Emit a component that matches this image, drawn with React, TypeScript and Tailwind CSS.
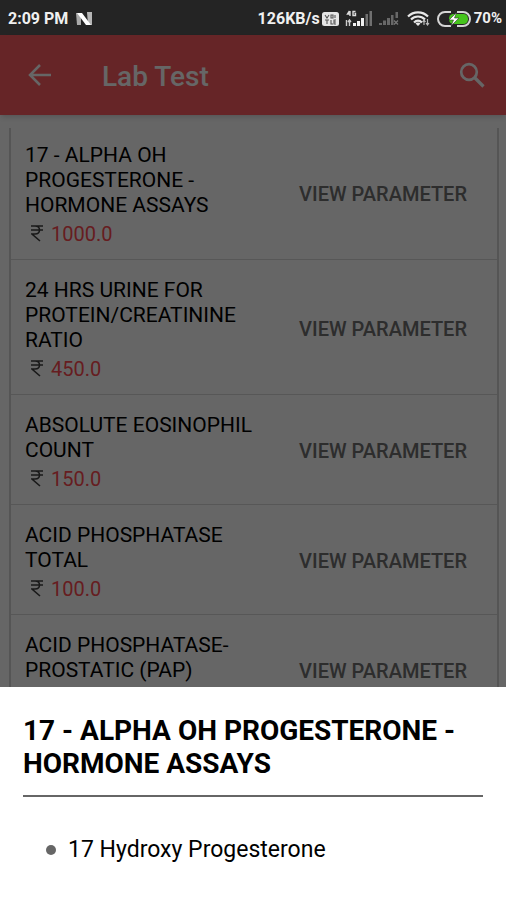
const tests = [
  { name: '17 - ALPHA OH PROGESTERONE - HORMONE ASSAYS', price: '1000.0' },
  { name: '24 HRS URINE FOR PROTEIN/CREATININE RATIO', price: '450.0' },
  { name: 'ABSOLUTE EOSINOPHIL COUNT', price: '150.0' },
  { name: 'ACID PHOSPHATASE TOTAL', price: '100.0' },
  { name: 'ACID PHOSPHATASE-PROSTATIC (PAP)', price: '500.0' },
];

function NIcon() {
  return (
    <svg width="17" height="14" viewBox="0 0 17 14" aria-hidden="true">
      <path d="M0 1h5v12H1z" fill="#a8a8a8" />
      <path d="M11 0h5v13h-4z" fill="#b5b5b5" />
      <path d="M1 1h5l9 12h-5z" fill="#fff" />
    </svg>
  );
}

function VolteIcon() {
  return (
    <svg width="17" height="14" viewBox="0 0 17 14" aria-hidden="true">
      <rect width="17" height="14" rx="2.5" fill="#e6e6e6" />
      <path d="M3 3l2 3 2-3M9 3h2v3H9zM13 3v3M3 8h4M5 8v4M9 8v4h2M14 8h-2v4h2M12 10h2" stroke="#555" strokeWidth="1.1" fill="none" />
    </svg>
  );
}

function SignalIcon() {
  return (
    <svg width="28" height="17" viewBox="0 0 28 17" aria-hidden="true">
      <path d="M4.5 1L2.5 4h3M5 1v5M10.500 1.500H8v4h2.500v-2H9.500" stroke="#ddd" strokeWidth="1.400" fill="none" />
      <path d="M1.500 10v6M4.500 16v-5M3 12l1.500-2L6 12" stroke="#ccc" strokeWidth="1.400" fill="none" />
      <path d="M8 13h3v3H8zM12 11h3v5h-3zM16 8h3v8h-3z" fill="#f0f0f0" />
      <path d="M20.500 4h2.500v12h-2.500zM24.500 1h2.500v15h-2.500z" fill="#707070" />
    </svg>
  );
}

function NoSignalIcon() {
  return (
    <svg width="20" height="15" viewBox="0 0 20 15" aria-hidden="true">
      <path d="M0 12h3v2H0zM4 9.500h3V14H4zM8 7h3v7H8zM12 4h2.500v10H12zM16.500 1H19v6h-2.500z" fill="#686868" />
      <path d="M15 9.500l4 4M19 9.500l-4 4" stroke="#777" strokeWidth="1.300" />
    </svg>
  );
}

function WifiIcon() {
  return (
    <svg width="24" height="16" viewBox="0 0 24 16" aria-hidden="true">
      <g stroke="#e8e8e8" strokeWidth="2.200" fill="none">
        <path d="M1 5.500C6.500 0 15.500 0 21 5.500" />
        <path d="M4 8.500c4-4 10-4 14 0" />
        <path d="M7 11.500c2.500-2.500 5.500-2.500 8 0" />
      </g>
      <path d="M11 15l-2.500-2.500c1.500-1.300 3.500-1.300 5 0z" fill="#e8e8e8" />
      <path d="M17 14V9m-1.500 2L17 9l1.500 2M20.500 8v6m-1.500-2l1.500 2 1.500-2" stroke="#bbb" strokeWidth="1.200" fill="none" />
    </svg>
  );
}

function BatteryIcon() {
  return (
    <svg width="35" height="16" viewBox="0 0 35 16" aria-hidden="true">
      <rect x="12" y="3" width="19" height="10" rx="4.500" fill="#45c41c" />
      <path d="M14 1H8a7 7 0 000 14h6M20 1h6a7 7 0 010 14h-6" stroke="#d5d5d5" strokeWidth="2" fill="none" />
      <path d="M19.500 1.500L12 9h4.500L14 15l8-8h-4.500z" fill="#fff" stroke="#333" strokeWidth=".6" />
    </svg>
  );
}

function RupeeIcon() {
  return (
    <svg width="12" height="17" viewBox="0 0 12 17" fill="none" stroke="#404040" strokeWidth="1.600" role="img" aria-label="Rupees">
      <path d="M0 1h12M0 5h12M2 1h2c6 0 6 8 0 8H1l8 7" />
    </svg>
  );
}

export default function App() {
  return (
    <div className="relative flex h-screen flex-col overflow-hidden bg-white font-[Roboto,sans-serif] text-black">
      <div className="flex h-[35px] shrink-0 items-center justify-between bg-[#242424] pl-2 pr-1 pt-0.5 text-base font-bold text-[#f0f0f0]">
        <div className="flex items-center gap-2">
          <span>2:09 PM</span>
          <NIcon />
        </div>
        <div className="flex items-center">
          <span>126KB/s</span>
          <span className="ml-0.5"><VolteIcon /></span>
          <span className="ml-1.5"><SignalIcon /></span>
          <span className="ml-1.5"><NoSignalIcon /></span>
          <span className="ml-2"><WifiIcon /></span>
          <span className="ml-1.5 mr-0.5"><BatteryIcon /></span>
          <span className="text-[15px]">70%</span>
        </div>
      </div>

      <header className="flex h-20 shrink-0 items-center bg-[#ff5c61] px-5 text-white shadow-md">
        <button type="button" aria-label="Back" className="flex size-10 items-center justify-center">
          <svg width="24" height="22" viewBox="0 0 24 22" fill="none" stroke="currentColor" strokeWidth="2.500">
            <path d="M23 11H2.500M12 1L2 11l10 10" />
          </svg>
        </button>
        <h1 className="ml-[42px] flex-1 pt-1 text-[28px] font-medium">Lab Test</h1>
        <button type="button" aria-label="Search" className="flex size-7 items-center justify-center">
          <svg width="26" height="26" viewBox="0 0 26 26" fill="none" stroke="currentColor" strokeWidth="2.700">
            <circle cx="10" cy="10" r="7.800" />
            <path d="M15.500 15.500l9 9" strokeWidth="3.200" />
          </svg>
        </button>
      </header>

      <main className="min-h-0 flex-1 overflow-hidden pl-[9px] pr-[7px] pt-[13px]">
        <ul className="border-x-2 border-[#d4d4d4]">
          {tests.map((test) => (
            <li key={test.name} className="flex items-center border-b border-[#dadada] pl-[14px] pr-[30px] pt-[3px] first:pt-0">
              <div className="flex-1 pb-[11px] pt-[15px]">
                <h2 className="w-[234px] text-[21px] leading-[25px]">{test.name}</h2>
                <p className="flex h-[30px] items-center gap-2 pl-1.5 text-xl text-[#ff4a50]">
                  <RupeeIcon />
                  <span className="pt-0.5">{test.price}</span>
                </p>
              </div>
              <button type="button" className="whitespace-nowrap text-xl font-medium text-[#707070]">VIEW PARAMETER</button>
            </li>
          ))}
        </ul>
      </main>

      <div className="absolute inset-x-0 bottom-0 top-[35px] flex flex-col justify-end bg-black/60">
        <section role="dialog" aria-labelledby="sheet-title" className="bg-white px-[23px] pb-[37px] pt-[27px]">
          <h2 id="sheet-title" className="text-[28px] font-bold leading-[33px]">
            17 - ALPHA OH PROGESTERONE - HORMONE ASSAYS
          </h2>
          <hr className="mt-[15px] border-t-2 border-[#666]" />
          <ul className="mt-10 pl-[23px]">
            <li className="flex items-center gap-3 text-[23px] leading-[26px]">
              <span className="size-[10px] rounded-full bg-[#666]" />
              17 Hydroxy Progesterone
            </li>
          </ul>
        </section>
      </div>
    </div>
  );
}
